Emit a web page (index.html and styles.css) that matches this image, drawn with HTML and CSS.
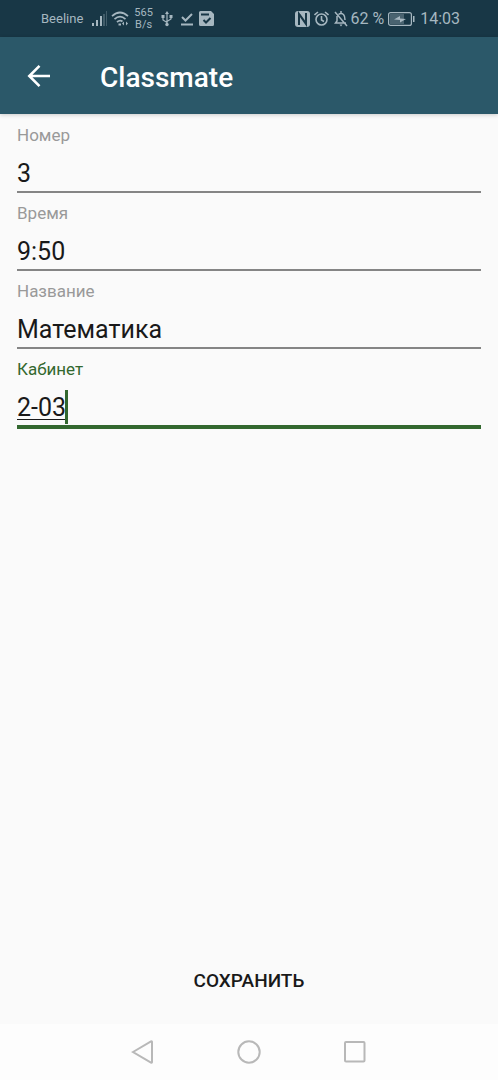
FILE: index.html
```html
<!DOCTYPE html>
<html lang="ru">
<head>
<meta charset="utf-8">
<meta name="viewport" content="width=device-width, initial-scale=1">
<title>Classmate</title>
<link rel="stylesheet" href="styles.css">
</head>
<body>
<div class="screen">
  <div class="status">
    <div class="status-group">
      <span class="carrier">Beeline</span>
      <svg class="signal" width="16" height="16" viewBox="0 0 16 16" fill="currentColor"><path d="M0 12h2v3H0zM4 9h2v6H4zM8 5h2v10H8z"/><path opacity=".3" d="M11 3h2v12h-2zM14 0h1v15h-1z"/></svg>
      <svg width="18" height="16" viewBox="0 0 18 16" fill="none" stroke="currentColor" stroke-width="1.7"><path d="M1 5.2Q9-2.2 17 5.2M3.5 8.2Q9 3.2 14.5 8.2M6 11Q9 8.400 11.500 10.500"/><path d="M7.500 13.500h2.500" stroke-width="2"/><path d="M13 10.500l-2 2 2 2zM15 10.500l2 2-2 2z" fill="currentColor" stroke="none"/></svg>
      <span class="speed">565<br>B/s</span>
      <svg class="usb" width="12" height="16" viewBox="0 0 12 16" fill="none" stroke="currentColor" stroke-width="1.200"><path d="M6 2v11M2 6v3l4 2.500M10 5v3L6 10.500"/><path d="M6 0l2 3H4zM.5 4h3v3h-3zM8.500 4h3v3h-3z" fill="currentColor" stroke="none"/><circle cx="6" cy="13.500" r="1.700" fill="currentColor" stroke="none"/></svg>
      <svg class="check" width="12" height="14" viewBox="0 0 12 14" fill="none" stroke="currentColor" stroke-width="2"><path d="M1 5l3.500 3.500L11 2M0 12.500h12"/></svg>
      <svg class="save" width="15" height="15" viewBox="0 0 15 15"><path fill="currentColor" d="M1.500 0H12l3 3v10.500a1.500 1.500 0 0 1-1.500 1.500h-12A1.500 1.500 0 0 1 0 13.500v-12A1.500 1.500 0 0 1 1.500 0z"/><path class="cut" d="M2 3.500h8M4.500 9l2.500 2.500L11.500 7"/></svg>
    </div>
    <div class="status-group status-right">
      <svg width="15" height="16" viewBox="0 0 15 16"><rect width="15" height="16" rx="3" fill="currentColor"/><path class="cut" d="M4 14V3l7 10V2M4.500 3.500l6.500 9"/></svg>
      <svg class="alarm" width="15" height="16" viewBox="0 0 15 16" fill="none" stroke="currentColor" stroke-width="1.600"><circle cx="7.500" cy="8.500" r="5.500"/><path d="M7.500 5v4l2.500 1.500M.5 4L4 1M14.500 4L11 1"/></svg>
      <svg class="bell" width="14" height="16" viewBox="0 0 14 16" fill="none" stroke="currentColor" stroke-width="1.500"><path d="M3 5v5l-1.500 2H12M4.500 3.500Q7 1.500 9.500 3.500 11 5 11 9M7 0v2M1 1l12 14"/><path d="M5.500 13.500h3l-1.500 2z" fill="currentColor" stroke="none"/></svg>
      <span class="percent">62 %</span>
      <svg class="battery" width="27" height="14" viewBox="0 0 27 14"><rect x=".6" y=".6" width="22.800" height="12.800" rx="2" fill="none" stroke="currentColor" stroke-width="1.200"/><path fill="currentColor" opacity=".35" d="M2 2h14v10H2z"/><path fill="currentColor" d="M25 4h1.500v6H25zM6 7.500l6-3.500v2.500l6 .5-6 3.500V8z"/></svg>
      <span class="clock">14:03</span>
    </div>
  </div>
  <header class="toolbar">
    <button class="back" type="button" aria-label="Назад"><svg width="24" height="24" viewBox="0 0 24 24" fill="none" stroke="currentColor" stroke-width="2.600"><path d="M23 12H3M12.500 1.800L2.300 12l10.200 10.200"/></svg></button>
    <h1 class="title">Classmate</h1>
  </header>
  <form class="form">
    <div class="field"><label class="label" for="number">Номер</label><div class="box"><input class="input" id="number" type="text" value="3"></div></div>
    <div class="field"><label class="label" for="time">Время</label><div class="box"><input class="input" id="time" type="text" value="9:50"></div></div>
    <div class="field"><label class="label" for="name">Название</label><div class="box"><input class="input" id="name" type="text" value="Математика"></div></div>
    <div class="field active"><label class="label" for="room">Кабинет</label><div class="box"><input class="input" id="room" type="text" value="2-03"><span class="caret"></span></div></div>
    <button class="submit" type="button">СОХРАНИТЬ</button>
  </form>
  <nav class="navbar">
    <button class="nav-button" type="button" aria-label="Назад"><svg width="24" height="24" viewBox="0 0 24 24"><path d="M2 12L20 1.500q1-.5 1 .5v20q0 1-1 .5z"/></svg></button>
    <button class="nav-button" type="button" aria-label="Домой"><svg width="24" height="24" viewBox="0 0 24 24"><circle cx="12" cy="12" r="10.700"/></svg></button>
    <button class="nav-button" type="button" aria-label="Недавние"><svg width="24" height="24" viewBox="0 0 24 24"><rect x="2" y="2" width="19.500" height="19.500" rx="1"/></svg></button>
  </nav>
</div>
</body>
</html>
```
FILE: styles.css
```css
* { box-sizing: border-box; }
body { margin: 0; background: #fafafa; font-family: Roboto, "Noto Sans", sans-serif; color: #191919; }
button { border: 0; padding: 0; background: none; font: inherit; color: inherit; }
svg { display: block; flex: none; }
.screen { min-height: 100vh; display: flex; flex-direction: column; }
.status { height: 37px; padding: 0 38px 0 41px; display: flex; align-items: center; justify-content: space-between; background: #183746; color: #a6b7c0; }
.status-group { display: flex; align-items: center; white-space: nowrap; }
.carrier { font-size: 13px; }
.signal { margin: 0 3px 0 9px; }
.speed { margin: 0 8px 0 5px; font-size: 11px; line-height: 12px; text-align: center; }
.check { margin: 0 6px 0 8px; }
.cut { fill: none; stroke: #183746; stroke-width: 2; }
.alarm { margin: 0 5px 0 4px; }
.percent { margin: 0 4px 0 2px; font-size: 16px; }
.clock { margin-left: 5px; font-size: 16px; }
.toolbar { height: 77px; padding: 0 27px; display: flex; align-items: center; gap: 49px; background: #2b5869; color: #fff; box-shadow: 0 1px 4px #00000030; }
.title { margin: 0; padding-top: 4px; font-size: 28px; line-height: 34px; font-weight: 500; }
.form { flex: 1; padding: 10px 17px 20px; display: flex; flex-direction: column; gap: 9px; }
.field { display: flex; flex-direction: column; }
.label { font-size: 17px; line-height: 22px; color: #999; }
.box { display: flex; padding: 10px 0 1px; border-bottom: 2px solid #858585; }
.input { flex: 1; min-width: 0; height: 34px; padding: 0; border: 0; outline: 0; background: none; font: inherit; font-size: 25px; color: inherit; }
.active .label { color: #33682f; }
.active .box { border-bottom: 4px solid #33682f; }
.active .input { flex: none; width: 50px; field-sizing: content; text-decoration: underline; text-decoration-thickness: 1px; text-underline-offset: 3px; }
.caret { width: 3px; margin-left: -2px; background: #33682f; }
.submit { margin-top: auto; height: 48px; font-size: 19px; font-weight: 500; }
.navbar { height: 56px; padding: 0 90px; display: flex; background: #fdfdfd; }
.nav-button { flex: 1; display: flex; align-items: center; justify-content: center; }
.nav-button svg { fill: none; stroke: #b8b8b8; stroke-width: 2; }
```
